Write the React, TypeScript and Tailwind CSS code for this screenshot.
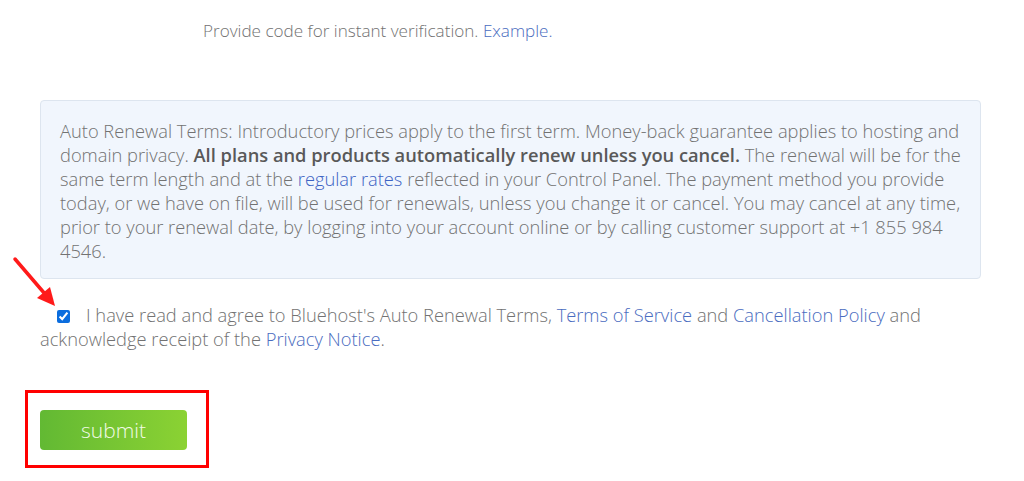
export default function App() {
  return (
    <div
      className="relative w-[1024px] h-[481px] bg-white overflow-hidden text-[18.3px] leading-[24px] font-light text-[#727272]"
      style={{ fontFamily: '"Open Sans", "Noto Sans", sans-serif' }}
    >
      <p className="pl-[203px] pt-[19px] text-[17.1px]">
        Provide code for instant verification.{' '}
        <a className="text-[#4a6cc0]">Example.</a>
      </p>

      <div className="ml-[40px] mr-[43px] mt-[57px] rounded-[4px] border border-[#dde5ef] bg-[#f1f6fd] px-[19px] pt-[18px] pb-[15px]">
        <p>
          Auto Renewal Terms: Introductory prices apply to the first term. Money-back guarantee applies to hosting and
          domain privacy. <b className="font-semibold text-[#595959]">All plans and products automatically renew unless you cancel.</b>{' '}
          The renewal will be for the same term length and at the <a className="text-[#3d63c4]">regular rates</a> reflected in
          your Control Panel. The payment method you provide today, or we have on file, will be used for renewals, unless you
          change it or cancel. You may cancel at any time, prior to your renewal date, by logging into your account online or
          by calling customer support at +1 855 984 4546.
        </p>
      </div>

      <p className="ml-[40px] mr-[43px] mt-[24px]">
        <input
          type="checkbox"
          defaultChecked
          className="ml-[17px] mr-[16px] h-[13px] w-[13px] align-[-1px] accent-[#0b6dde]"
        />
        I have read and agree to Bluehost's Auto Renewal Terms, <a className="text-[#4a6cc0]">Terms of Service</a> and{' '}
        <a className="text-[#4a6cc0]">Cancellation Policy</a> and acknowledge receipt of the{' '}
        <a className="text-[#4a6cc0]">Privacy Notice</a>.
      </p>

      <div className="ml-[25px] mt-[39px] inline-block border-[3px] border-[#ff0000] pl-[12px] pr-[19px] pt-[17px] pb-[15px]">
        <button className="flex h-[40px] w-[147px] items-center justify-center rounded-[4px] bg-gradient-to-r from-[#62b933] to-[#8bd233] text-[21px] font-light text-[#f2fbe6]">
          submit
        </button>
      </div>

      {/* red annotation arrow */}
      <svg className="absolute left-[10px] top-[254px]" width="52" height="58" viewBox="0 0 52 58">
        <line x1="5" y1="5" x2="35" y2="40" stroke="#ff1a1a" strokeWidth="3.5" strokeLinecap="round" />
        <polygon points="45,52 27,44 40,33" fill="#ff1a1a" />
      </svg>
    </div>
  );
}
